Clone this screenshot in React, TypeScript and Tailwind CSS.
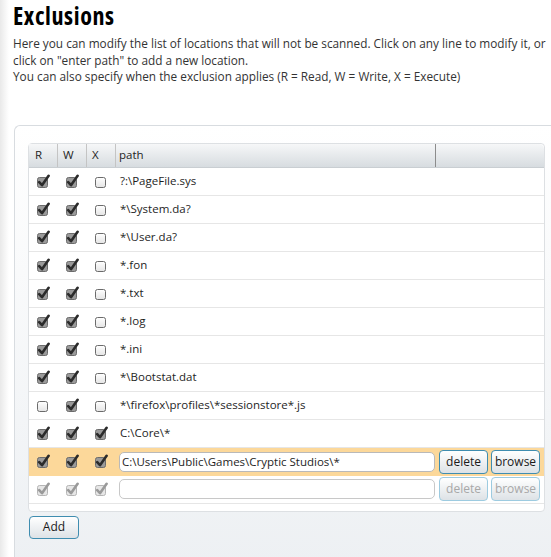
import React from 'react';

type Row = { r: boolean; w: boolean; x: boolean; path: string };

const rows: Row[] = [
  { r: true, w: true, x: false, path: '?:\\PageFile.sys' },
  { r: true, w: true, x: false, path: '*\\System.da?' },
  { r: true, w: true, x: false, path: '*\\User.da?' },
  { r: true, w: true, x: false, path: '*.fon' },
  { r: true, w: true, x: false, path: '*.txt' },
  { r: true, w: true, x: false, path: '*.log' },
  { r: true, w: true, x: false, path: '*.ini' },
  { r: true, w: true, x: false, path: '*\\Bootstat.dat' },
  { r: false, w: true, x: false, path: '*\\firefox\\profiles\\*sessionstore*.js' },
  { r: true, w: true, x: true, path: 'C:\\Core\\*' },
];

const Check = ({ on, dim }: { on: boolean; dim?: boolean }) => {
  const box = dim ? '#b5b5b5' : '#6b6b6b';
  const mark = dim ? '#9a9a9a' : '#2b2b2b';
  return (
    <svg width="16" height="15" viewBox="0 0 16 15" className="block">
      <defs>
        <linearGradient id="cbg" x1="0" y1="0" x2="0" y2="1">
          <stop offset="0" stopColor="#ffffff" />
          <stop offset="1" stopColor="#e4e4e4" />
        </linearGradient>
      </defs>
      <rect x="1.5" y="3.5" width="10" height="10" rx="2" fill={on ? (dim ? '#e6e6e6' : '#9a9a9a') : 'url(#cbg)'} stroke={box} />
      {on && <path d="M3.2 8.2 L6 11.2 L12.6 1.8" fill="none" stroke={mark} strokeWidth="2.6" strokeLinecap="round" strokeLinejoin="round" />}
    </svg>
  );
};

const Btn = ({ label, dim }: { label: string; dim?: boolean }) => (
  <button
    className={`h-[24px] w-[49px] rounded-[4px] border bg-gradient-to-b from-white to-[#dde2e6] text-[12px] leading-none ${
      dim ? 'border-[#9dcbe0] text-[#a8a8a8]' : 'border-[#3f8db0] text-[#1a1a1a]'
    }`}
  >
    {label}
  </button>
);

export default function App() {
  return (
    <div className="w-[551px] h-[557px] overflow-hidden bg-[linear-gradient(to_right,#e9e9e9,#ffffff_9px)] font-['Open_Sans',sans-serif] text-[#333]">
      <div className="pl-[13px]">
        <h1 className="font-stretch-[75%] text-[24px] font-bold leading-[32px] text-black tracking-[0.6px]">
          Exclusions
        </h1>
        <p className="mt-[3px] whitespace-nowrap text-[11.8px] leading-[16.5px] text-[#333]">
          Here you can modify the list of locations that will not be scanned. Click on any line to modify it, or
          <br />
          click on "enter path" to add a new location.
          <br />
          You can also specify when the exclusion applies (R = Read, W = Write, X = Execute)
        </p>
      </div>

      <div className="ml-[14px] mt-[40px] h-[440px] rounded-tl-[6px] border-l border-t border-[#d8dce0] bg-gradient-to-b from-white to-[#edf0f3] pl-[13px] pt-[17px]">
        <div className="w-[517px] rounded-[4px] border border-[#dde0e3] bg-white pb-[7px] text-[11.5px] text-[#1e1e1e]">
          <div className="flex h-[24px] items-center rounded-tr-[5px] border-b border-[#c9ced2] bg-gradient-to-b from-[#f6f7f8] to-[#d7dce0]">
            <div className="flex h-full w-[29px] items-center border-r border-[#c4c4c4] pl-[6px]">R</div>
            <div className="flex h-full w-[29px] items-center border-r border-[#c4c4c4] pl-[5px]">W</div>
            <div className="flex h-full w-[29px] items-center border-r border-[#c4c4c4] pl-[5px]">X</div>
            <div className="flex h-full w-[320px] items-center border-r border-[#8c8c8c] pl-[3px]">path</div>
            <div className="flex-1" />
          </div>

          {rows.map((row, i) => (
            <div key={i} className="flex h-[28px] items-center border-b border-[#e6e6e6]">
              <div className="flex w-[29px] justify-center pl-[1px]"><Check on={row.r} /></div>
              <div className="flex w-[29px] justify-center"><Check on={row.w} /></div>
              <div className="flex w-[29px] justify-center"><Check on={row.x} /></div>
              <div className="pl-[4px]">{row.path}</div>
            </div>
          ))}

          <div className="flex h-[28px] items-center bg-[#fcd89a]">
            <div className="flex w-[29px] justify-center pl-[1px]"><Check on /></div>
            <div className="flex w-[29px] justify-center"><Check on /></div>
            <div className="flex w-[29px] justify-center"><Check on /></div>
            <div className="ml-[3px] flex h-[20px] w-[316px] items-center rounded-[5px] border border-[#b9b9b9] bg-white pl-[2px]">
              C:\Users\Public\Games\Cryptic Studios\*
            </div>
            <div className="ml-[4px] flex gap-[3px]">
              <Btn label="delete" />
              <Btn label="browse" />
            </div>
          </div>

          <div className="flex h-[28px] items-center border-b border-[#e6e6e6]">
            <div className="flex w-[29px] justify-center pl-[1px]"><Check on dim /></div>
            <div className="flex w-[29px] justify-center"><Check on dim /></div>
            <div className="flex w-[29px] justify-center"><Check on dim /></div>
            <div className="ml-[3px] h-[20px] w-[316px] rounded-[5px] border border-[#c8c8c8] bg-white" />
            <div className="ml-[4px] flex gap-[3px]">
              <Btn label="delete" dim />
              <Btn label="browse" dim />
            </div>
          </div>
        </div>

        <button className="ml-[1px] mt-[4px] h-[23px] w-[50px] rounded-[4px] border border-[#3f8db0] bg-gradient-to-b from-white to-[#dde2e6] text-[12px] text-[#1a1a1a]">
          Add
        </button>
      </div>
    </div>
  );
}
